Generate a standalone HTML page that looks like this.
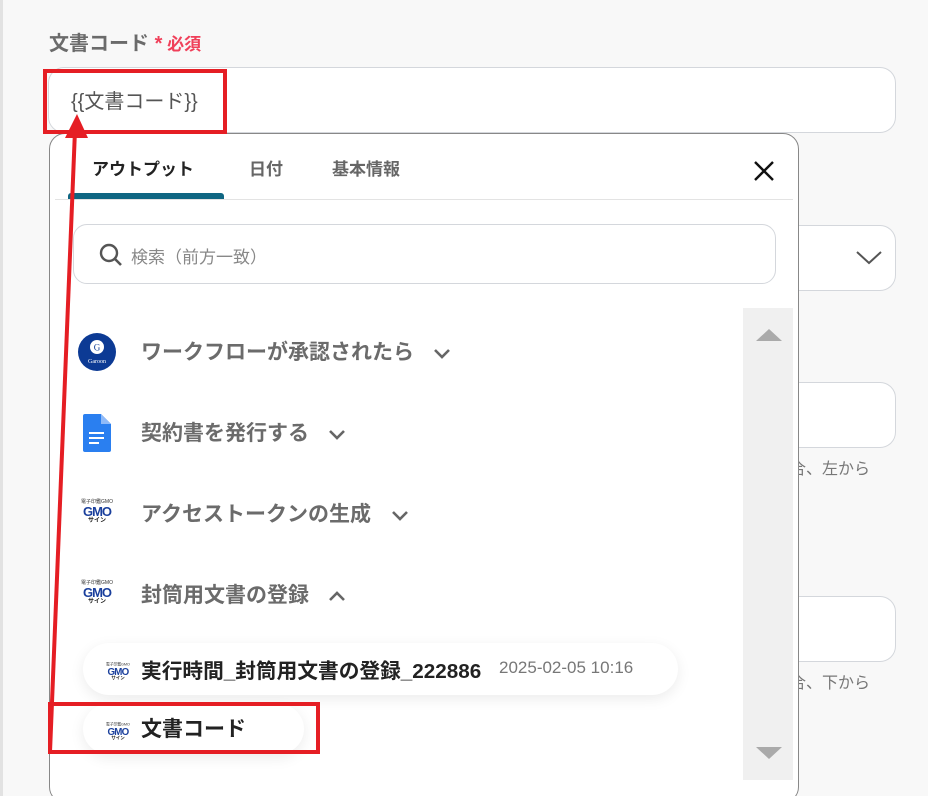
<!DOCTYPE html>
<html><head><meta charset="utf-8"><style>
*{box-sizing:border-box;margin:0;padding:0}
html{width:928px;height:796px;overflow:hidden}
body{width:928px;height:796px;overflow:hidden;background:#f8f8f8;font-family:"Liberation Sans","Noto Sans CJK JP",sans-serif;position:relative}
.abs{position:absolute}
.inp{position:absolute;background:#fff;border:1px solid #d4d7dc;border-radius:16px}
.item{position:absolute;left:141px;font-size:21px;font-weight:bold;color:#6b6b6b;white-space:nowrap}
.gmo{position:absolute;width:40px;text-align:center;font-family:"Liberation Sans","Noto Sans CJK JP",sans-serif;line-height:1}
.gmo .a{font-size:5px;color:#333}
.gmo .b{font-size:13px;font-weight:bold;color:#1a3f9c;letter-spacing:-1px}
.gmo .c{font-size:6px;font-weight:bold;color:#222}
.pill{position:absolute;background:#fff;border-radius:26px;box-shadow:0 4px 14px rgba(0,0,0,.08)}
</style></head><body>
<div class="abs" style="left:0;top:0;width:3px;height:796px;background:#e2e2e2"></div>
<div class="abs" style="left:49px;top:27px;font-size:20px;font-weight:bold;color:#6b6b6b">文書コード <span style="color:#f0405a;font-size:20px">*</span><span style="color:#f0405a;font-size:17px"> 必須</span></div>
<div class="inp" style="left:48px;top:67px;width:848px;height:66px"></div>
<div class="abs" style="left:71px;top:85px;font-size:20px;color:#555">{{文書コード}}</div>
<div class="inp" style="left:760px;top:225px;width:136px;height:66px"></div>
<svg class="abs" style="left:855px;top:248px" width="28" height="18"><path d="M2 4 L14 15 L26 4" fill="none" stroke="#555" stroke-width="2"/></svg>
<div class="inp" style="left:760px;top:382px;width:136px;height:66px"></div>
<div class="abs" style="left:790px;top:455px;font-size:16px;color:#777">合、左から</div>
<div class="inp" style="left:760px;top:596px;width:136px;height:66px"></div>
<div class="abs" style="left:790px;top:669px;font-size:16px;color:#777">合、下から</div>

<div class="abs" style="left:49px;top:133px;width:750px;height:670px;background:#fff;border:1px solid #888;border-radius:16px"></div>
<div class="abs" style="left:92px;top:155px;font-size:17px;font-weight:bold;color:#222">アウトプット</div>
<div class="abs" style="left:249px;top:155px;font-size:17px;font-weight:bold;color:#666">日付</div>
<div class="abs" style="left:332px;top:155px;font-size:17px;font-weight:bold;color:#666">基本情報</div>
<div class="abs" style="left:55px;top:199px;width:738px;height:1px;background:#e3e3e3"></div>
<div class="abs" style="left:68px;top:193px;width:156px;height:6px;background:#0f6682;border-radius:3px 3px 0 0"></div>
<svg class="abs" style="left:752px;top:159px" width="24" height="24"><path d="M3 3L21 21M21 3L3 21" stroke="#111" stroke-width="2.4"/></svg>
<div class="inp" style="left:73px;top:224px;width:703px;height:60px;border-radius:14px"></div>
<svg class="abs" style="left:98px;top:242px" width="26" height="26"><circle cx="11" cy="11" r="8" fill="none" stroke="#555" stroke-width="2.4"/><path d="M17 17L23 23" stroke="#555" stroke-width="2.6"/></svg>
<div class="abs" style="left:131px;top:243px;font-size:17px;color:#888">検索（前方一致）</div>
<div class="abs" style="left:743px;top:308px;width:50px;height:472px;background:#f0f0f0"></div>
<svg class="abs" style="left:755px;top:326px" width="28" height="16"><path d="M1 15L14 3L27 15Z" fill="#aaa"/></svg>
<svg class="abs" style="left:755px;top:746px" width="28" height="16"><path d="M1 1L14 13L27 1Z" fill="#aaa"/></svg>

<svg class="abs" style="left:78px;top:333px" width="38" height="38"><circle cx="19" cy="19" r="19" fill="#0c3a94"/><circle cx="19" cy="14" r="7" fill="#fff"/><text x="19" y="17.5" font-size="9" text-anchor="middle" fill="#0c3a94" font-family="Liberation Serif">G</text><text x="19" y="30" font-size="6" text-anchor="middle" fill="#fff" font-family="Liberation Serif">Garoon</text></svg>
<div class="item" style="top:336px">ワークフローが承認されたら</div>
<svg class="abs" style="left:432px;top:347px" width="20" height="14"><path d="M3 3L10 10L17 3" fill="none" stroke="#666" stroke-width="2.6"/></svg>

<svg class="abs" style="left:83px;top:414px" width="28" height="38"><path d="M2 0H18L28 10V36a2 2 0 0 1-2 2H2a2 2 0 0 1-2-2V2a2 2 0 0 1 2-2Z" fill="#2a7ff0"/><path d="M18 0V10H28Z" fill="#8fbaf8"/><path d="M6 19H21M6 24H21M6 29H16" stroke="#fff" stroke-width="2"/></svg>
<div class="item" style="top:417px">契約書を発行する</div>
<svg class="abs" style="left:327px;top:428px" width="20" height="14"><path d="M3 3L10 10L17 3" fill="none" stroke="#666" stroke-width="2.6"/></svg>

<div class="gmo" style="left:77px;top:500px"><div class="a">電子印鑑GMO</div><div class="b">GMO</div><div class="c">サイン</div></div>
<div class="item" style="top:498px">アクセストークンの生成</div>
<svg class="abs" style="left:390px;top:509px" width="20" height="14"><path d="M3 3L10 10L17 3" fill="none" stroke="#666" stroke-width="2.6"/></svg>

<div class="gmo" style="left:77px;top:581px"><div class="a">電子印鑑GMO</div><div class="b">GMO</div><div class="c">サイン</div></div>
<div class="item" style="top:579px">封筒用文書の登録</div>
<svg class="abs" style="left:327px;top:589px" width="20" height="14"><path d="M3 11L10 4L17 11" fill="none" stroke="#666" stroke-width="2.6"/></svg>

<div class="pill" style="left:83px;top:643px;width:595px;height:52px"></div>
<div class="gmo" style="left:100px;top:660px;width:36px;transform:scale(.75)"><div class="a">電子印鑑GMO</div><div class="b">GMO</div><div class="c">サイン</div></div>
<div class="abs" style="left:141px;top:654px;font-size:20.7px;font-weight:bold;color:#222;white-space:nowrap">実行時間_封筒用文書の登録_222886</div>
<div class="abs" style="left:499px;top:658px;font-size:17px;color:#777">2025-02-05 10:16</div>
<div class="pill" style="left:83px;top:704px;width:221px;height:50px"></div>
<div class="gmo" style="left:100px;top:720px;width:36px;transform:scale(.75)"><div class="a">電子印鑑GMO</div><div class="b">GMO</div><div class="c">サイン</div></div>
<div class="abs" style="left:141px;top:713px;font-size:21px;font-weight:bold;color:#222">文書コード</div>

<div class="abs" style="left:43px;top:69px;width:184px;height:65px;border:4px solid #e51e24"></div>
<div class="abs" style="left:48px;top:702px;width:272px;height:52px;border:4px solid #e51e24"></div>
<svg class="abs" style="left:0;top:0" width="928" height="796"><path d="M50 752L75 130" stroke="#e51e24" stroke-width="4"/><path d="M77 114L65 138L88 138Z" fill="#e51e24"/></svg>
</body></html>
